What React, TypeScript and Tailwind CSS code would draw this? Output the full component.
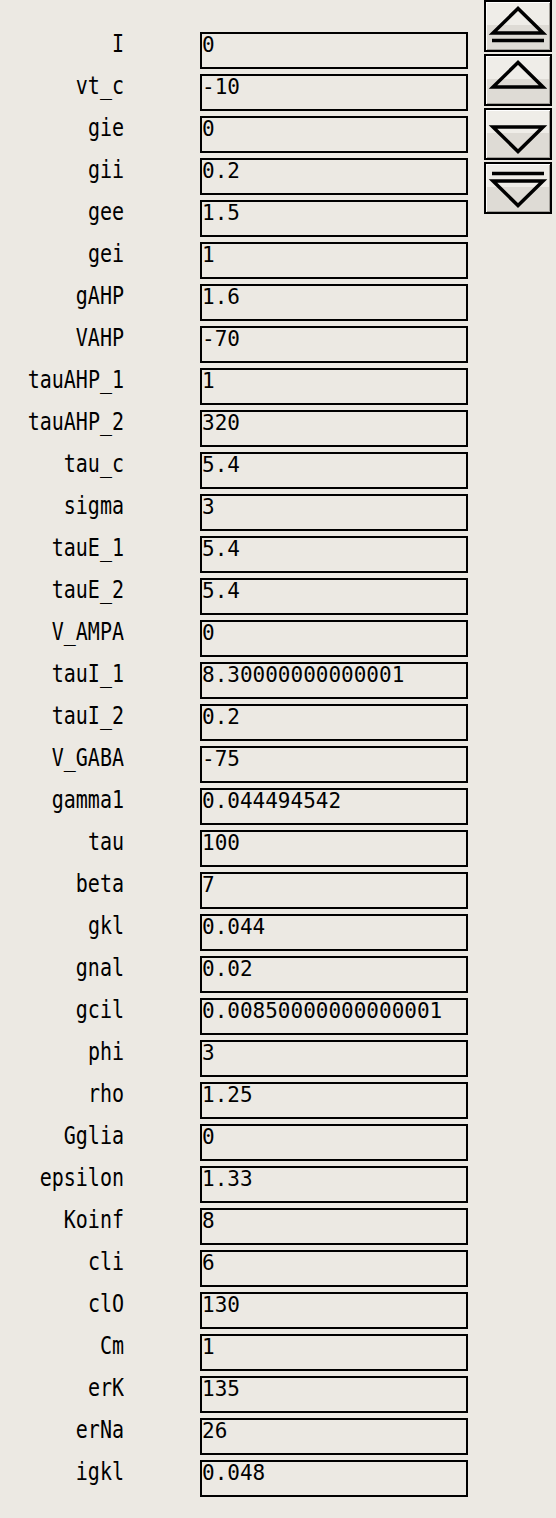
import React from "react";

const rows: [string, string][] = [
  ["I", "0"],
  ["vt_c", "-10"],
  ["gie", "0"],
  ["gii", "0.2"],
  ["gee", "1.5"],
  ["gei", "1"],
  ["gAHP", "1.6"],
  ["VAHP", "-70"],
  ["tauAHP_1", "1"],
  ["tauAHP_2", "320"],
  ["tau_c", "5.4"],
  ["sigma", "3"],
  ["tauE_1", "5.4"],
  ["tauE_2", "5.4"],
  ["V_AMPA", "0"],
  ["tauI_1", "8.30000000000001"],
  ["tauI_2", "0.2"],
  ["V_GABA", "-75"],
  ["gamma1", "0.044494542"],
  ["tau", "100"],
  ["beta", "7"],
  ["gkl", "0.044"],
  ["gnal", "0.02"],
  ["gcil", "0.00850000000000001"],
  ["phi", "3"],
  ["rho", "1.25"],
  ["Gglia", "0"],
  ["epsilon", "1.33"],
  ["Koinf", "8"],
  ["cli", "6"],
  ["clO", "130"],
  ["Cm", "1"],
  ["erK", "135"],
  ["erNa", "26"],
  ["igkl", "0.048"],
];

function ArrowIcon({ dir, bar }: { dir: "up" | "down"; bar: boolean }) {
  const tri = dir === "up" ? "34,8.5 9,33 59,33" : "9,19 59,19 34,43.5";
  const barY = dir === "up" ? 40.5 : 11.5;
  return (
    <svg width="64" height="48" viewBox="2 2 64 48" className="block">
      <polygon
        points={tri}
        fill="none"
        stroke="#000"
        strokeWidth="3.5"
        strokeLinejoin="miter"
      />
      {bar && <rect x="8" y={barY - 1.75} width="52" height="3.5" fill="#000" />}
    </svg>
  );
}

function Btn({ dir, bar }: { dir: "up" | "down"; bar: boolean }) {
  return (
    <div className="h-[52px] w-[68px] border-2 border-black bg-[linear-gradient(to_bottom,#efede8_0%,#efede8_48%,#dedbd5_48%,#dedbd5_100%)] shadow-[inset_1px_1px_0_#ffffff,inset_-1px_-1px_0_#a3a09a] flex items-center justify-center">
      <ArrowIcon dir={dir} bar={bar} />
    </div>
  );
}

export default function App() {
  return (
    <div className="flex h-[1518px] w-full bg-[#ece9e3] text-black overflow-hidden">
      <div className="flex flex-col gap-[5px] pt-[32px]">
        {rows.map(([label, value]) => (
          <div key={label} className="flex h-[37px]">
            <div className="w-[124px] -mt-px text-right leading-[20px] text-[20px] font-['DejaVu_Sans_Mono',monospace]">
              <span className="inline-block origin-top scale-y-125">{label}</span>
            </div>
            <div className="ml-[76px] w-[268px] h-[37px] border-2 border-black overflow-hidden whitespace-nowrap text-[21px] leading-[20px] font-['DejaVu_Sans_Mono',monospace]">
              <span className="inline-block origin-top scale-y-105">{value}</span>
            </div>
          </div>
        ))}
      </div>
      <div className="ml-[16px] flex flex-col gap-[2px]">
        <Btn dir="up" bar={true} />
        <Btn dir="up" bar={false} />
        <Btn dir="down" bar={false} />
        <Btn dir="down" bar={true} />
      </div>
    </div>
  );
}
